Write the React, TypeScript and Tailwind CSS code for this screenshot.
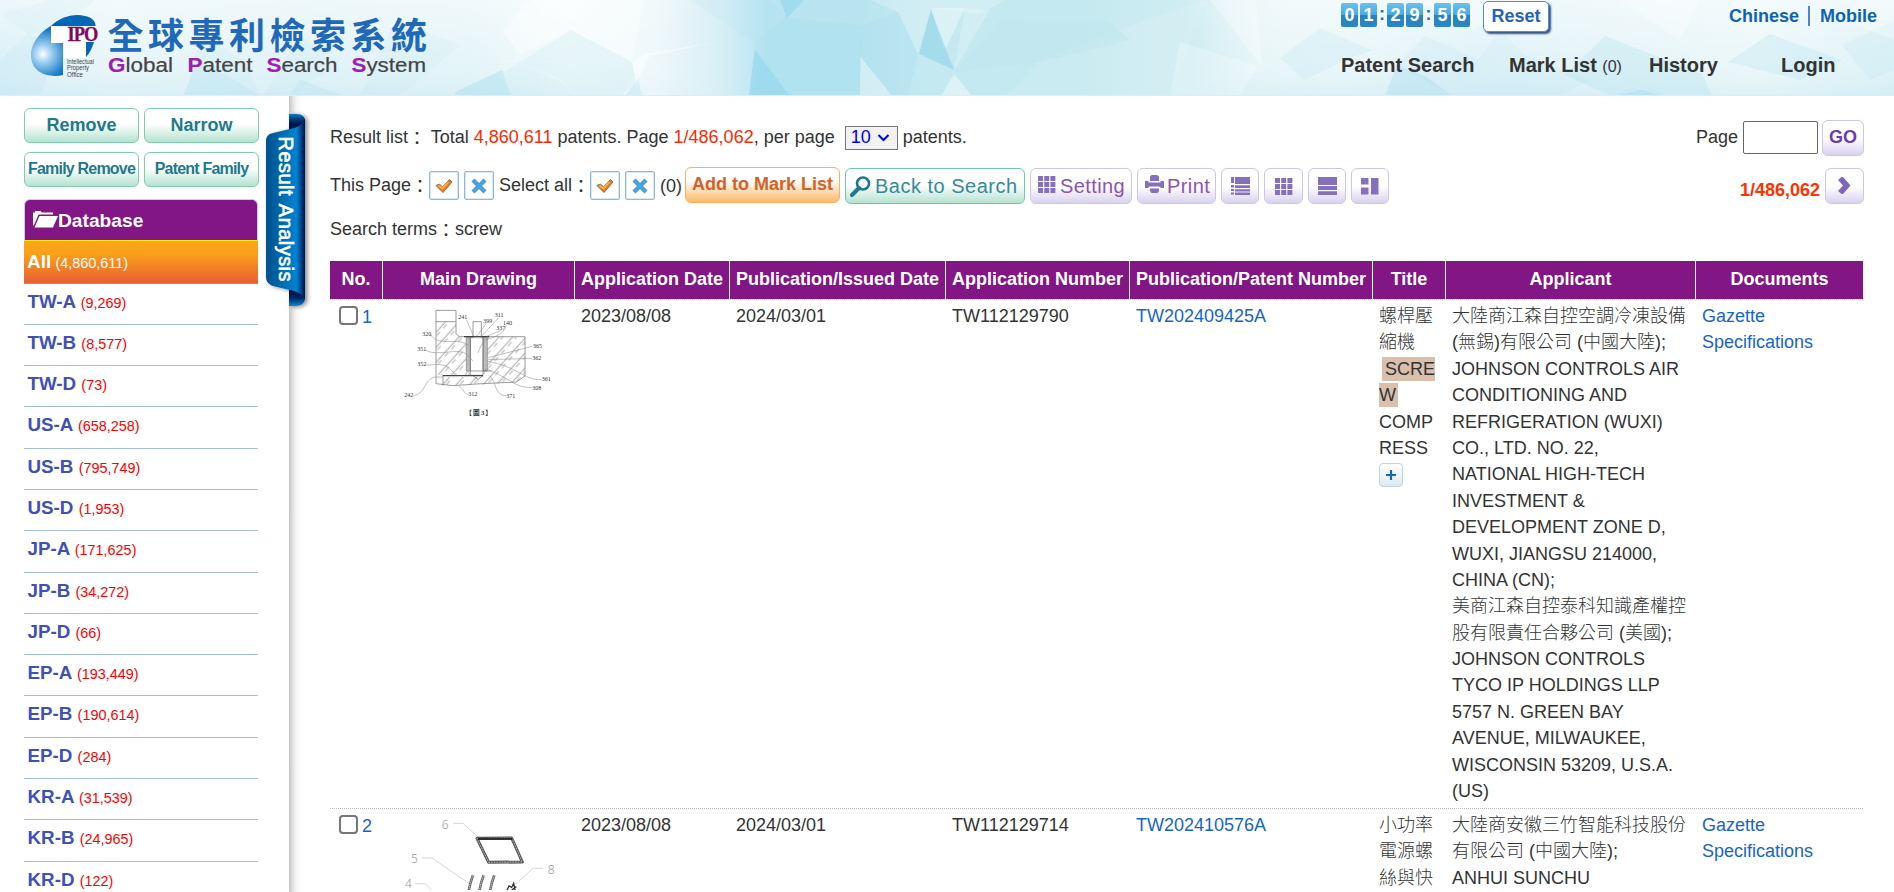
import React from "react";

const databases: [string, string][] = [
  ["TW-A", "9,269"],
  ["TW-B", "8,577"],
  ["TW-D", "73"],
  ["US-A", "658,258"],
  ["US-B", "795,749"],
  ["US-D", "1,953"],
  ["JP-A", "171,625"],
  ["JP-B", "34,272"],
  ["JP-D", "66"],
  ["EP-A", "193,449"],
  ["EP-B", "190,614"],
  ["EP-D", "284"],
  ["KR-A", "31,539"],
  ["KR-B", "24,965"],
  ["KR-D", "122"],
];

const columns = [
  "No.",
  "Main Drawing",
  "Application Date",
  "Publication/Issued Date",
  "Application Number",
  "Publication/Patent Number",
  "Title",
  "Applicant",
  "Documents",
];

const rowGrid = "grid grid-cols-[53px_192px_155px_216px_184px_243px_73px_250px_167px]";

function HeaderBackdrop() {
  return (
    <svg className="absolute inset-0 h-[96px] w-[1894px]" viewBox="0 0 1894 96" preserveAspectRatio="none">
      <defs>
        <linearGradient id="sky" x1="0" x2="1">
          <stop offset="0" stopColor="#d9f0f7" />
          <stop offset=".06" stopColor="#e6f5f9" />
          <stop offset=".17" stopColor="#dff2f8" />
          <stop offset=".25" stopColor="#e3f4f8" />
          <stop offset=".3" stopColor="#f2fafc" />
          <stop offset=".345" stopColor="#eff8fb" />
          <stop offset=".38" stopColor="#d8eff6" />
          <stop offset=".405" stopColor="#b9e4f1" />
          <stop offset=".45" stopColor="#b8e4ef" />
          <stop offset=".49" stopColor="#c4e9f1" />
          <stop offset=".57" stopColor="#c5e9f0" />
          <stop offset=".63" stopColor="#d0edf3" />
          <stop offset=".665" stopColor="#e6f5f8" />
          <stop offset=".71" stopColor="#e8f6f9" />
          <stop offset=".78" stopColor="#def2f8" />
          <stop offset=".86" stopColor="#e4f4f8" />
          <stop offset=".93" stopColor="#eaf7f9" />
          <stop offset="1" stopColor="#dcf1f7" />
        </linearGradient>
        <linearGradient id="veil" x1="0" x2="0" y1="0" y2="1">
          <stop offset="0" stopColor="#fff" stopOpacity=".5" />
          <stop offset=".6" stopColor="#fff" stopOpacity=".12" />
          <stop offset="1" stopColor="#bfe6f2" stopOpacity=".3" />
        </linearGradient>
        <linearGradient id="fadeStops" x1="0" x2="1">
          <stop offset="0" stopColor="#fff" />
          <stop offset=".28" stopColor="#fff" />
          <stop offset=".38" stopColor="#000" />
          <stop offset=".62" stopColor="#000" />
          <stop offset=".68" stopColor="#fff" />
          <stop offset="1" stopColor="#fff" />
        </linearGradient>
        <mask id="fade" maskUnits="userSpaceOnUse" x="0" y="0" width="1894" height="96">
          <rect width="1894" height="96" fill="url(#fadeStops)" />
        </mask>
      </defs>
      <rect width="1894" height="96" fill="url(#sky)" />
      <rect width="1894" height="96" fill="url(#veil)" mask="url(#fade)" />
      <g fill="#a8ddee">
        <path d="M0 60L28 34L58 48L40 96H0z" fillOpacity=".14" />
        <path d="M0 14L50 0H95L60 30L28 34z" fillOpacity=".1" />
        <path d="M197 62L183 96H260L228 76z" fillOpacity=".32" />
        <path d="M197 30L245 62L260 96L228 76L197 62z" fillOpacity=".12" />
        <path d="M300 35L340 62L290 96H262z" fillOpacity=".1" />
        <path d="M395 22L460 45L400 96H360z" fillOpacity=".1" />
        <path d="M290 96L300 80L345 96z" fillOpacity=".25" />
        <path d="M455 92L502 70L511 96H455z" fillOpacity=".45" />
        <path d="M470 50L504 72L520 62L562 82L577 96H511L502 70z" fillOpacity=".15" />
        <path d="M571 30L632 62L636 80L622 96H577L562 80L520 62z" fillOpacity=".16" />
        <path d="M625 96L638 78L642 96z" fillOpacity=".3" />
        <path d="M690 0H770L788 18L755 42L716 18z" fillOpacity=".12" />
      </g>
      <g fill="#fff">
        <path d="M530 0H612L572 30L545 14z" fillOpacity=".5" />
        <path d="M520 55L502 32L530 0L571 30z" fillOpacity=".4" />
        <path d="M640 20L632 62L571 30L612 0H645z" fillOpacity=".35" />
        <path d="M632 62L644 54L716 42L650 56L636 84z" fillOpacity=".45" />
        <path d="M860 56L892 96H860z" fillOpacity=".35" />
        <path d="M931 8H965L944 52z" fillOpacity=".38" />
        <path d="M965 8L990 10L954 70z" fillOpacity=".22" />
        <path d="M954 74L972 96H941z" fillOpacity=".4" />
        <path d="M870 0H1005L980 14L931 8L918 54L898 12z" fillOpacity=".22" />
        <path d="M1180 42L1258 66L1240 96H1170z" fillOpacity=".25" />
        <path d="M1040 60L1145 20L1206 0L1170 96H1005z" fillOpacity=".1" />
        <path d="M1210 0L1262 66L1256 0z" fillOpacity=".3" />
      </g>
      <path d="M780 0H804L787 18z" fill="#8fd5ed" fillOpacity=".6" />
      <path d="M755 42L787 18L862 25L860 96H749z" fill="#9bdaef" fillOpacity=".25" />
      <path d="M755 50L790 96H749z" fill="#8ed6ee" fillOpacity=".55" />
      <path d="M862 25L898 12L918 54L908 96H892L860 56z" fill="#a5ddee" fillOpacity=".25" />
      <path d="M931 10L954 70L919 54z" fill="#93d6ea" fillOpacity=".65" />
      <path d="M1000 20L1108 22L1130 40L1040 62L955 72z" fill="#bfe6ee" fillOpacity=".5" />
      <g fill="#a8ddee">
        <path d="M1320 28L1280 58L1305 80L1345 60L1372 50z" fillOpacity=".18" />
        <path d="M1397 65L1385 96H1453L1425 76z" fillOpacity=".4" />
        <path d="M1425 36L1397 65L1453 96L1480 60z" fillOpacity=".14" />
        <path d="M1500 30L1525 55L1590 80L1560 96H1453z" fillOpacity=".12" />
        <path d="M1605 36L1565 75L1612 96H1712L1702 74z" fillOpacity=".28" />
        <path d="M1642 90L1612 96H1665z" fillOpacity=".5" />
        <path d="M1770 34L1728 62L1800 80L1842 60z" fillOpacity=".24" />
        <path d="M1894 20L1842 45L1870 80L1894 70z" fillOpacity=".16" />
      </g>
      <path d="M1420 0L1470 30L1540 0zM1620 0L1680 40L1700 0zM1842 20L1894 40V0H1860z" fill="#fff" fillOpacity=".3" />
      <rect y="95" width="1894" height="1" fill="#d9eff5" />
    </svg>
  );
}

function Logo() {
  return (
    <svg className="absolute left-0 top-0" width="480" height="96" viewBox="0 0 480 96">
      <defs>
        <radialGradient id="drop" cx="43" cy="54" r="30" gradientUnits="userSpaceOnUse">
          <stop offset="0" stopColor="#fff" />
          <stop offset=".3" stopColor="#9ccdf0" />
          <stop offset=".8" stopColor="#1c7ec8" />
          <stop offset="1" stopColor="#0867b4" />
        </radialGradient>
      </defs>
      <path d="M51 26L51 43H63V75C50 78 31 74 31 55C31 43 41 31 51 26z" fill="url(#drop)" />
      <path d="M51 26C60 17 74 13 85 16C91 17 96 21 95.500 26z" fill="#0367b5" />
      <path d="M86 42H94C92 48 90 53 86 57z" fill="#0367b5" />
      <path d="M51 27H96V42H86V58H64V43H51z" fill="#fff" />
      <text x="67.500" y="41" textLength="30" lengthAdjust="spacingAndGlyphs" fontFamily="Liberation Serif, serif" fontWeight="bold" fontSize="20" letterSpacing="-1" fill="#7d0a60" stroke="#7d0a60" strokeWidth=".3">IPO</text>
      <g fontFamily="Liberation Sans, sans-serif" fontSize="6.500" fill="#444">
        <text x="67" y="63.500" textLength="27" lengthAdjust="spacingAndGlyphs">Intellectual</text>
        <text x="67" y="70" textLength="22" lengthAdjust="spacingAndGlyphs">Property</text>
        <text x="67" y="76.500" textLength="16" lengthAdjust="spacingAndGlyphs">Office</text>
      </g>
      <text x="107.500" y="48.500" fontFamily="Noto Sans CJK TC, sans-serif" fontWeight="bold" fontSize="36" letterSpacing="4.500" fill="#1f69b8">全球專利檢索系統</text>
      <g fontFamily="Liberation Sans, sans-serif" fontSize="20" fill="#444" stroke="#444" strokeWidth=".2">
        <text x="108" y="72" textLength="65" lengthAdjust="spacingAndGlyphs"><tspan fill="#9d1fb0" stroke="#9d1fb0" fontWeight="bold">G</tspan>lobal</text>
        <text x="187.500" y="72" textLength="65" lengthAdjust="spacingAndGlyphs"><tspan fill="#9d1fb0" stroke="#9d1fb0" fontWeight="bold">P</tspan>atent</text>
        <text x="266.500" y="72" textLength="71" lengthAdjust="spacingAndGlyphs"><tspan fill="#9d1fb0" stroke="#9d1fb0" fontWeight="bold">S</tspan>earch</text>
        <text x="351.500" y="72" textLength="74.500" lengthAdjust="spacingAndGlyphs"><tspan fill="#9d1fb0" stroke="#9d1fb0" fontWeight="bold">S</tspan>ystem</text>
      </g>
    </svg>
  );
}

function Digit({ children }: { children: React.ReactNode }) {
  return (
    <span className="flex h-[24px] w-[17px] items-center justify-center rounded-[2px] bg-[linear-gradient(#6cc0ee_0%,#4aaae2_48%,#2b82bd_52%,#2a86c4_100%)] text-[18px] font-bold text-white">
      {children}
    </span>
  );
}

function Header() {
  return (
    <header className="relative h-[96px] w-full shrink-0">
      <HeaderBackdrop />
      <Logo />
      <div className="relative flex h-full flex-col pl-[1341px]">
        <div className="flex h-[34px] items-start">
          <div className="flex w-[142px] items-start pt-[3px] font-bold text-[#2a6fa8]">
            <div className="flex gap-[2px]"><Digit>0</Digit><Digit>1</Digit></div>
            <span className="w-[10px] text-center text-[18px] leading-[22px]">:</span>
            <div className="flex gap-[2px]"><Digit>2</Digit><Digit>9</Digit></div>
            <span className="w-[11px] text-center text-[18px] leading-[22px]">:</span>
            <div className="flex gap-[2px]"><Digit>5</Digit><Digit>6</Digit></div>
          </div>
          <button className="mt-px h-[31px] w-[66px] rounded-[5px] border border-[#4a90e2] bg-white pb-[2px] text-[18px] font-bold leading-[26px] text-[#2563b8] shadow-[2px_2px_2px_#35557f]">Reset</button>
          <nav className="ml-[180px] flex text-[18px] font-bold leading-[20px] text-[#0b63b5]">
            <a className="mt-[6px] w-[81px] border-r-2 border-[#4f86c0]">Chinese</a>
            <a className="ml-[10px] mt-[6px]">Mobile</a>
          </nav>
        </div>
        <nav className="flex pt-[19px] text-[20px] font-bold leading-[24px] text-[#333]">
          <a className="w-[168px]">Patent Search</a>
          <a className="w-[140px]">Mark List <span className="text-[16px] font-normal">(0)</span></a>
          <a className="w-[132px]">History</a>
          <a>Login</a>
        </nav>
      </div>
    </header>
  );
}

const greenButton =
  "flex h-[35px] items-center justify-center whitespace-nowrap rounded-[6px] border border-[#7fcbb0] bg-[linear-gradient(#fff_0%,#fff_45%,#b5e2d0_100%)] pb-px font-bold text-[#1d7a8c]";

function Sidebar() {
  return (
    <aside className="w-[289px] shrink-0 pl-[24px] pt-[12px]">
      <div className="grid grid-cols-[115px_115px] gap-x-[5px] gap-y-[9px]">
        <button className={greenButton + " text-[18px]"}>Remove</button>
        <button className={greenButton + " text-[18px]"}>Narrow</button>
        <button className={greenButton + " text-[16px] tracking-[-0.8px]"}>Family Remove</button>
        <button className={greenButton + " text-[16px] tracking-[-0.8px]"}>Patent Family</button>
      </div>
      <div className="mt-[12px] w-[234px]">
        <div className="flex h-[42px] items-center rounded-t-[6px] border-x border-t border-b border-x-[#c9cdf0] border-t-[#c9cdf0] border-b-[#ffee00] bg-[#831685] pl-[8px] pt-[3px] text-[19.2px] font-bold text-white">
          <svg className="mt-[-5px]" width="25" height="18" viewBox="0 0 25 18">
            <path d="M0 16V2.500H2V1H7.500L9 2.500H20V4.500H5.500L1.500 14z" fill="#fff" />
            <path d="M6.500 6H25L20 17.500H1.500z" fill="#fff" />
          </svg>
          Database
        </div>
        <div className="h-[42.5px] border-b border-[#f7800a] bg-[linear-gradient(#faa41a_0%,#faa019_30%,#e85f35_100%)] pl-[3px] text-[19px] font-bold leading-[41px] text-white">
          All <span className="-ml-px text-[14.4px] font-normal">(4,860,611)</span>
        </div>
        {databases.map(([name, count]) => (
          <div key={name} className="h-[41.3px] border-b border-[#a5bfcf] pl-[3.5px] text-[18.8px] font-bold leading-[36px] text-[#3f51b5]">
            {name} <span className="text-[14.4px] font-normal text-[#f00]">({count})</span>
          </div>
        ))}
      </div>
    </aside>
  );
}

function AnalysisTab() {
  return (
    <svg className="absolute left-[260px] top-[110px]" width="54" height="200" viewBox="260 110 54 200">
      <defs>
        <linearGradient id="ribbon" x1="0" x2="1">
          <stop offset="0" stopColor="#00528f" />
          <stop offset=".35" stopColor="#0066aa" />
          <stop offset=".78" stopColor="#0083d0" />
          <stop offset=".92" stopColor="#003a7c" />
          <stop offset="1" stopColor="#000c3c" />
        </linearGradient>
        <linearGradient id="fold" x1="0" x2="0" y1="0" y2="1">
          <stop offset="0" stopColor="#0a78c0" />
          <stop offset=".5" stopColor="#001a4c" />
          <stop offset="1" stopColor="#000a38" />
        </linearGradient>
        <linearGradient id="foldEnd" x1="0" x2="0" y1="0" y2="1">
          <stop offset="0" stopColor="#000a38" />
          <stop offset=".55" stopColor="#002660" />
          <stop offset="1" stopColor="#0a86d2" />
        </linearGradient>
        <filter id="soft" x="-20%" y="-10%" width="150%" height="120%">
          <feDropShadow dx="2.500" dy="1" stdDeviation="2" floodColor="#000" floodOpacity=".45" />
        </filter>
      </defs>
      <g filter="url(#soft)">
        <path d="M289 114H297C302 114 305 117 305 121V132H289z" fill="url(#fold)" />
        <path d="M289 288H305V298C305 303 301 306 295 306H289z" fill="url(#foldEnd)" />
        <path d="M305 118V300C304 296 300 293 294 291L273 286C268 284 266 281 266 277V141C266 137 268 134 273 133L294 128C301 126 304 122 305 118z" fill="url(#ribbon)" />
      </g>
      <text transform="translate(278.500 136.500) rotate(90)" textLength="145" fontFamily="Liberation Sans, sans-serif" fontSize="20" wordSpacing="3" fill="#fff" stroke="#fff" strokeWidth=".6">Result Analysis</text>
    </svg>
  );
}

function MarkBox({ on }: { on?: boolean }) {
  return (
    <button className="flex h-[29px] w-[30px] shrink-0 items-center justify-center rounded-[2px] border border-[#8fb8de] bg-white shadow-[inset_0_0_0_1px_#d8e7f5]">
      {on ? (
        <svg width="18" height="16" viewBox="0 0 18 16">
          <path d="M1 7.500L4.500 6L7.500 9L14.500 1.500L17 4L8 14.500z" fill="#e8781c" stroke="#9a6a50" strokeWidth="1" />
          <path d="M3.500 7.500L7.500 10.500L13.500 4" stroke="#ffb53a" strokeWidth="1.800" fill="none" />
        </svg>
      ) : (
        <svg width="16" height="16" viewBox="0 0 16 16">
          <path d="M2 2L14 14M14 2L2 14" stroke="#6b8fa8" strokeWidth="4.400" />
          <path d="M2.500 2.500L13.500 13.500M13.500 2.500L2.500 13.500" stroke="#3aa8ea" strokeWidth="2.800" />
        </svg>
      )}
    </button>
  );
}

const lilac =
  "flex h-[36px] shrink-0 items-center rounded-[6px] border border-[#cdc6e8] bg-[linear-gradient(#fff_0%,#fff_50%,#d9d2ee_100%)]";

function Colon() {
  return <span className="align-[-2px]">：</span>;
}

function Toolbar() {
  return (
    <div className="flex h-[37px] items-center">
      <span className="w-[99px] whitespace-nowrap leading-[22px]">This Page<Colon /></span>
      <MarkBox on />
      <span className="w-[5px]" />
      <MarkBox />
      <span className="w-[96px] whitespace-nowrap pl-[5px] leading-[22px]">Select all<Colon /></span>
      <MarkBox on />
      <span className="w-[5px]" />
      <MarkBox />
      <span className="w-[30px] pl-[5px] pt-[2px]">(0)</span>
      <button className="h-[36px] w-[155px] self-start whitespace-nowrap rounded-[6px] border border-[#fbb05c] bg-[linear-gradient(#fff_0%,#fff_35%,#fdb968_100%)] pb-px font-bold text-[#d2622a]">Add to Mark List</button>
      <button className="ml-[5px] mt-px flex h-[36px] w-[180px] items-center whitespace-nowrap rounded-[6px] border border-[#74c6a9] bg-[linear-gradient(#fff_0%,#fff_45%,#b5e2d0_100%)] pl-[4px] text-[20px] tracking-[0.5px] text-[#388a97]">
        <svg className="mr-[4px] shrink-0" width="21" height="21" viewBox="0 0 21 21">
          <circle cx="13" cy="7.500" r="6" stroke="#1d7a8c" strokeWidth="2.600" fill="none" />
          <path d="M9 12L2 19" stroke="#1d7a8c" strokeWidth="4" strokeLinecap="round" />
        </svg>
        Back to Search
      </button>
      <button className={lilac + " ml-[5px] mt-px w-[102px] whitespace-nowrap pl-[7px] text-[20px] tracking-[0.4px] text-[#8a55b0]"}>
        <svg className="mb-[3px] mr-[4px] shrink-0" width="18" height="17" viewBox="0 0 18 17" fill="#8570bd">
          {[0, 6.2, 12.4].map((x) => [0, 6, 12].map((y) => <rect key={x + "-" + y} x={x} y={y} width="5" height="5" />))}
        </svg>
        Setting
      </button>
      <button className={lilac + " ml-[5px] mt-px w-[79px] whitespace-nowrap pl-[7px] text-[20px] tracking-[0.4px] text-[#8a55b0]"}>
        <svg className="mb-[4px] mr-[3px] shrink-0" width="19" height="19" viewBox="0 0 19 19" fill="#8570bd">
          <path d="M5 1.500L6.500 0H12L14 1.500V6H5z" />
          <path d="M0 6H3.500V7.500H15.500V6H19V13H16L14.500 11.500H4.500L3 13H0z" />
          <path d="M5 13.500H14V16L12.500 18H6.500L5 16z" />
        </svg>
        Print
      </button>
      <button className={lilac + " ml-[5px] mt-px w-[38px] justify-center"}>
        <svg width="19" height="18" viewBox="0 0 19 18" fill="#8570bd">
          <path d="M0 0H3V6H0zM4 0H19V7H4zM0 8H3V10.500H0zM4 8.300H19V11H4zM0 12H3V14H0zM4 12.200H19V14.500H4zM0 15.500H3V17.500H0zM4 15.500H19V18H4z" />
        </svg>
      </button>
      <button className={lilac + " ml-[5px] mt-px w-[39px] justify-center"}>
        <svg width="18" height="17" viewBox="0 0 18 17" fill="#8570bd">
          {[0, 6.2, 12.4].map((x) => [0, 6, 12].map((y) => <rect key={x + "-" + y} x={x} y={y} width="5" height="5" />))}
        </svg>
      </button>
      <button className={lilac + " ml-[5px] mt-px w-[38px] justify-center"}>
        <svg width="19" height="18" viewBox="0 0 19 18" fill="#8570bd">
          <path d="M0 0H19V8H0zM0 9H19V13H0zM0 14.200H19V18H0z" />
        </svg>
      </button>
      <button className={lilac + " ml-[5px] mt-px w-[38px] justify-center"}>
        <svg width="18" height="18" viewBox="0 0 18 18" fill="#8570bd">
          <path d="M0 1H7.500V7.500H0zM0 10.500H7.500V17.500H0zM10 1H17.500V17.500H10z" />
        </svg>
      </button>
      <span className="ml-auto pr-[5px] pt-[9px] font-bold text-[#ff3300]">1/486,062</span>
      <button className={lilac + " mt-px w-[39px] justify-center"}>
        <svg className="mb-[2px]" width="13" height="17" viewBox="0 0 13 17">
          <path d="M0 3L3.500 0H5L12.500 8.500L5 17H3.500L0 14L5 8.500z" fill="#7f66b8" />
        </svg>
      </button>
    </div>
  );
}

function DrawingOne() {
  const labels: [number, number, string][] = [
    [416, 207, "241"], [491, 217, "399"], [525, 199, "311"], [550, 223, "140"], [530, 239, "337"],
    [308, 256, "320"], [293, 302, "351"], [293, 346, "352"], [254, 441, "242"], [446, 437, "312"],
    [560, 442, "371"], [638, 418, "308"], [666, 393, "361"], [638, 328, "362"], [640, 292, "365"],
  ];
  return (
    <svg className="ml-[14px] mt-[3.7px]" width="150" height="114" viewBox="250 170 450 342">
      <defs>
        <pattern id="hatch" width="30" height="30" patternUnits="userSpaceOnUse" patternTransform="rotate(42)">
          <path d="M4 0V30M12 0V16" stroke="#777" strokeWidth="1.900" />
        </pattern>
        <pattern id="mesh" width="6" height="6" patternUnits="userSpaceOnUse">
          <path d="M0 0L6 6M6 0L0 6" stroke="#555" strokeWidth="1.200" />
        </pattern>
      </defs>
      <path d="M349 214H409V250L419 259H439V362H452V373H370V405L349 400V382H370V373H349z" fill="url(#hatch)" />
      <path d="M503 259H616V377L590 395L470 404H370V380H460L491 376V362H503z" fill="url(#hatch)" />
      <g fill="none" stroke="#777" strokeWidth="2.200">
        <path d="M349 400V180H409V250L419 259H616V377L590 395L470 401L400 406L349 400M349 214H409" />
        <path d="M370 373V405" />
        <path d="M452 262H490V375H452z" fill="#fff" />
        <path d="M460 262V214H485V262" fill="#fff" />
        <path d="M460 376L475 387L490 376M452 362H515" />
        <path d="M370 376H490" stroke="#444" strokeWidth="4" />
      </g>
      <path d="M440 262H452V362H440zM490 262H503V362H490z" fill="url(#mesh)" stroke="#666" strokeWidth="1.600" />
      <path d="M433 259H508" stroke="#333" strokeWidth="3.500" />
      <g fill="none" stroke="#888" strokeWidth="1.600">
        <path d="M440 207L462 258M500 219L471 258M537 202L483 260M545 240L500 258M560 225C550 260 510 262 495 270C485 280 480 295 475 308" />
        <path d="M333 252C350 290 420 260 448 285M318 300C350 320 420 290 442 312L461 333M318 344C345 346 380 330 405 373" />
        <path d="M281 436C320 430 310 390 345 380H370M447 432C430 432 435 415 418 407M560 436C520 436 535 395 508 375" />
        <path d="M638 288L505 322M638 324L505 328M666 388C610 390 600 350 500 332M638 412C580 412 570 380 495 355" />
      </g>
      <g fontFamily="Liberation Serif, serif" fontSize="18" fill="#333">
        {labels.map(([x, y, t]) => <text key={t} x={x} y={y}>{t}</text>)}
      </g>
      <text x="437" y="494" textLength="80" fontFamily="Liberation Serif, Noto Sans CJK TC, sans-serif" fontSize="20" fontWeight="bold" fill="#333">【圖3】</text>
    </svg>
  );
}

function DrawingTwo() {
  return (
    <svg className="ml-[14px] mt-[2px]" width="155" height="76" viewBox="250 78 465 228">
      <g fill="none" stroke="#bbb" strokeWidth="1.800">
        <path d="M400 106H430L475 147M307 210H338L450 288M287 287H317L335 306M670 241H640L588 288" />
      </g>
      <g fontFamily="Noto Sans, sans-serif" fontSize="36" fontWeight="300" fill="#999">
        <text x="366" y="122">6</text>
        <text x="274" y="226">5</text>
        <text x="256" y="301">4</text>
        <text x="684" y="257">8</text>
      </g>
      <path d="M472 151L576 150L608 222L507 223z" fill="none" stroke="#555" strokeWidth="9" strokeLinejoin="round" />
      <path d="M472 152L576 150L608 222L507 223z" fill="none" stroke="#aaa" strokeWidth="3.500" strokeDasharray="5 3" />
      <path d="M474 153H578" stroke="#111" strokeWidth="4" />
      <path d="M447 310C450 290 455 275 460 262M479 310C482 290 487 275 492 262M511 310C514 290 519 275 524 262" fill="none" stroke="#666" strokeWidth="8" />
      <path d="M447 310C450 290 455 275 460 262L467 270M479 310C482 290 487 275 492 262L499 270M511 310C514 290 519 275 524 262L531 270" fill="none" stroke="#ccc" strokeWidth="3" strokeDasharray="4 2" />
      <path d="M562 306L568 294L576 298L582 286L586 306M576 306L590 296" fill="none" stroke="#333" strokeWidth="4" />
    </svg>
  );
}

function Cell({ children, className = "" }: { children: React.ReactNode; className?: string }) {
  return <div className={"px-[6px] py-[3px] " + className}>{children}</div>;
}

function Lines({ items }: { items: string[] }) {
  return <>{items.map((t) => <div key={t} className="h-[26.4px] whitespace-nowrap">{t}</div>)}</>;
}

function NumberCell({ n }: { n: number }) {
  return (
    <div className="flex items-start pl-[9px] pt-[6px]">
      <span className="h-[19px] w-[19px] rounded-[4px] border-2 border-[#767676] bg-white" />
      <a className="ml-[4px] mt-[-2px] text-[#1764c8]">{n}</a>
    </div>
  );
}

function Documents() {
  return (
    <Cell className="text-[#1764c8]">
      <Lines items={["Gazette", "Specifications"]} />
    </Cell>
  );
}

function Results() {
  return (
    <section className="mt-[11px] w-[1533px] leading-[26.4px]">
      <div className={rowGrid + " h-[39px] border-b border-dotted border-[#ccc] bg-[#831685] bg-clip-padding text-center font-bold leading-[36px] text-white"}>
        {columns.map((c, i) => (
          <div key={c} className={"whitespace-nowrap " + (i < columns.length - 1 ? "border-r border-white" : "")}>{c}</div>
        ))}
      </div>
      <div className={rowGrid + " h-[509px] border-b border-dotted border-[#bbb]"}>
        <NumberCell n={1} />
        <Cell><DrawingOne /></Cell>
        <Cell>2023/08/08</Cell>
        <Cell>2024/03/01</Cell>
        <Cell>TW112129790</Cell>
        <Cell className="text-[#1764c8]">TW202409425A</Cell>
        <Cell className="font-light">
          <Lines items={["螺桿壓", "縮機"]} />
          <div className="h-[26.4px] whitespace-nowrap pl-[3px]"><span className="bg-[#d9bfac] py-[2px] pl-[3px]">SCRE</span></div>
          <div className="h-[26.4px]"><span className="bg-[#d9bfac] py-[2px] pr-[2px]">W</span></div>
          <Lines items={["COMP", "RESS"]} />
          <button className="mt-[2px] flex h-[24px] w-[24px] items-center justify-center rounded-[4px] border border-[#c3d5dc] bg-[linear-gradient(#fff,#dbe9f3)]">
            <svg width="10" height="10" viewBox="0 0 10 10"><path d="M5 0V10M0 5H10" stroke="#1569ad" strokeWidth="2.200" /></svg>
          </button>
        </Cell>
        <Cell className="font-light">
          <Lines
            items={[
              "大陸商江森自控空調冷凍設備",
              "(無錫)有限公司 (中國大陸);",
              "JOHNSON CONTROLS AIR",
              "CONDITIONING AND",
              "REFRIGERATION (WUXI)",
              "CO., LTD. NO. 22,",
              "NATIONAL HIGH-TECH",
              "INVESTMENT &",
              "DEVELOPMENT ZONE D,",
              "WUXI, JIANGSU 214000,",
              "CHINA (CN);",
              "美商江森自控泰科知識產權控",
              "股有限責任合夥公司 (美國);",
              "JOHNSON CONTROLS",
              "TYCO IP HOLDINGS LLP",
              "5757 N. GREEN BAY",
              "AVENUE, MILWAUKEE,",
              "WISCONSIN 53209, U.S.A.",
              "(US)",
            ]}
          />
        </Cell>
        <Documents />
      </div>
      <div className={rowGrid}>
        <NumberCell n={2} />
        <Cell><DrawingTwo /></Cell>
        <Cell>2023/08/08</Cell>
        <Cell>2024/03/01</Cell>
        <Cell>TW112129714</Cell>
        <Cell className="text-[#1764c8]">TW202410576A</Cell>
        <Cell className="font-light"><Lines items={["小功率", "電源螺", "絲與快"]} /></Cell>
        <Cell className="font-light"><Lines items={["大陸商安徽三竹智能科技股份", "有限公司 (中國大陸);", "ANHUI SUNCHU"]} /></Cell>
        <Documents />
      </div>
    </section>
  );
}

export default function App() {
  return (
    <div className="relative flex h-[892px] w-[1894px] flex-col overflow-hidden bg-white font-['Liberation_Sans','Noto_Sans_CJK_TC',sans-serif] text-[18px] text-[#333]">
      <Header />
      <div className="flex min-h-0 flex-1">
        <Sidebar />
        <div className="w-[41px] shrink-0 bg-[linear-gradient(90deg,#c4c4c4_0px,#e3e3e3_4px,#f8f8f8_8px,#fff_13px)]" />
        <main className="w-[1534px] shrink-0 pt-[24px]">
          <div className="flex h-[35px] items-center whitespace-nowrap">
            <span className="whitespace-pre leading-[22px]">Result list<Colon /> Total <span className="text-[#ff2a00]">4,860,611</span> patents. Page <span className="text-[#ff2a00]">1/486,062</span>, per page</span>
            <span className="ml-[10px] mr-[5px] flex h-[24px] w-[53px] items-center border border-[#767676] bg-[#f2f2f2] pl-[5px] text-[#0000f0]">
              10
              <svg className="ml-[6px]" width="13" height="8" viewBox="0 0 13 8"><path d="M1.500 1L6.500 6L11.500 1" fill="none" stroke="#0000f0" strokeWidth="2" /></svg>
            </span>
            patents.
            <span className="ml-auto mr-[5px]">Page</span>
            <span className="h-[33px] w-[75px] rounded-[2px] border border-[#666] bg-white" />
            <button className={lilac + " ml-[4px] w-[42px] justify-center font-bold text-[#6a3bb5]"}>GO</button>
          </div>
          <div className="h-[12px]" />
          <Toolbar />
          <div className="mt-[10px] h-[36px] leading-[31px]">Search terms<Colon />screw</div>
          <Results />
        </main>
      </div>
      <AnalysisTab />
    </div>
  );
}
